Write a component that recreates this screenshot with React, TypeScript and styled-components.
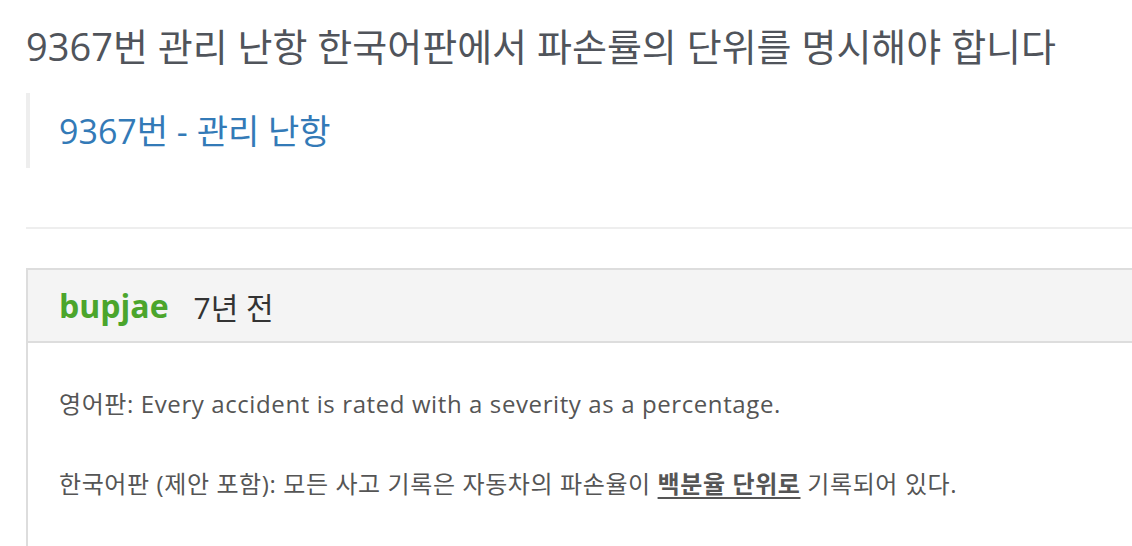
import React from "react";
import styled, { createGlobalStyle } from "styled-components";

const Global = createGlobalStyle`
  html, body { margin: 0; padding: 0; background: #fff; overflow: hidden; }
  body { font-family: "Open Sans", "Noto Sans CJK KR", sans-serif; }
`;

const Page = styled.div`
  width: 1200px;
  padding: 20px 0 0 26px;
  box-sizing: border-box;
`;

const Title = styled.h1`
  margin: 0;
  font-size: 38px;
  font-weight: 400;
  line-height: 52px;
  color: #50545b;
`;

const Quote = styled.blockquote`
  margin: 21px 0 0;
  padding: 20px 0 18px 29px;
  border-left: 4px solid #eee;
`;

const QuoteLink = styled.a`
  font-size: 34px;
  line-height: 37px;
  color: #337ab7;
  text-decoration: none;
`;

const Rule = styled.hr`
  margin: 59px 0 0;
  border: 0;
  border-top: 2px solid #eee;
`;

const Card = styled.section`
  margin-top: 39px;
  border: 2px solid #ddd;
  border-right: none;
`;

const CardHeader = styled.header`
  display: flex;
  align-items: center;
  gap: 25px;
  height: 71px;
  padding: 0 31px;
  background: #f4f4f4;
  border-bottom: 2px solid #ddd;
`;

const Author = styled.span`
  font-size: 32px;
  font-weight: 700;
  color: #4ba52c;
`;

const Time = styled.span`
  font-size: 30px;
  color: #333;
`;

const CardBody = styled.div`
  padding: 46px 31px 40px;
`;

const Para = styled.p`
  margin: 0 0 50px;
  font-size: 24px;
  letter-spacing: 0.6px;
  line-height: 30px;
  color: #555;
`;

const Strong = styled.strong`
  text-decoration: underline;
  text-underline-offset: 4px;
`;

export default function App() {
  return (
    <>
      <Global />
      <Page>
        <Title>9367번 관리 난항 한국어판에서 파손률의 단위를 명시해야 합니다</Title>
        <Quote>
          <QuoteLink href="#">9367번 - 관리 난항</QuoteLink>
        </Quote>
        <Rule />
        <Card>
          <CardHeader>
            <Author>bupjae</Author>
            <Time>7년 전</Time>
          </CardHeader>
          <CardBody>
            <Para>영어판: Every accident is rated with a severity as a percentage.</Para>
            <Para>
              한국어판 (제안 포함): 모든 사고 기록은 자동차의 파손율이 <Strong>백분율 단위로</Strong> 기록되어 있다.
            </Para>
          </CardBody>
        </Card>
      </Page>
    </>
  );
}
